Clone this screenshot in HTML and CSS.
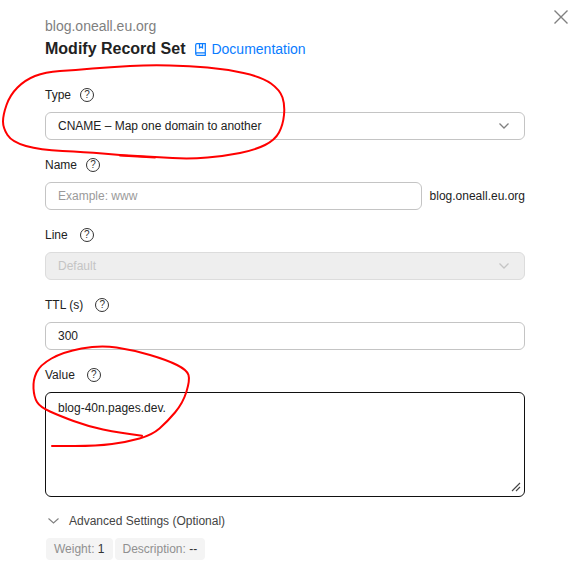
FILE: index.html
```html
<!DOCTYPE html>
<html lang="en">
<head>
<meta charset="utf-8">
<title>Modify Record Set</title>
<link rel="stylesheet" href="styles.css">
</head>
<body>
<main class="dialog">
  <button class="close" aria-label="Close">
    <svg width="16" height="16" viewBox="0 0 16 16"><path d="M1.5 1.5L14.5 14.5M14.5 1.5L1.5 14.5" fill="none" stroke="#808080" stroke-width="1.4"/></svg>
  </button>
  <header class="head">
    <div class="domain">blog.oneall.eu.org</div>
    <div class="title-row">
      <h1 class="title">Modify Record Set</h1>
      <a class="doc" href="#">
        <svg width="11" height="13" viewBox="0 0 11 13"><path d="M2 .7H10.3V12.3H2A1.4 1.4 0 0 1 .7 11V2A1.4 1.4 0 0 1 2 .7ZM.7 11A1.4 1.4 0 0 1 2 9.8H10.3M4.5 .7V5L6 4L7.5 5V.7" fill="none" stroke="#0a7cff" stroke-width="1.2"/></svg>
        Documentation
      </a>
    </div>
  </header>
  <form class="form">
    <div class="field">
      <div class="label"><span>Type</span><i class="help gap-type">?</i></div>
      <div class="control select"><span>CNAME – Map one domain to another</span>
        <svg class="chev" width="10" height="6" viewBox="0 0 10 6"><path d="M.5 .5L5 5L9.500 .5" fill="none" stroke="#808080" stroke-width="1.3"/></svg>
      </div>
    </div>
    <div class="field">
      <div class="label"><span>Name</span><i class="help gap-name">?</i></div>
      <div class="name-row">
        <div class="control name-input placeholder">Example: www</div>
        <span class="suffix">blog.oneall.eu.org</span>
      </div>
    </div>
    <div class="field">
      <div class="label"><span>Line</span><i class="help gap-line">?</i></div>
      <div class="control select disabled"><span>Default</span>
        <svg class="chev" width="10" height="6" viewBox="0 0 10 6"><path d="M.5 .5L5 5L9.500 .5" fill="none" stroke="#c4c4c4" stroke-width="1.3"/></svg>
      </div>
    </div>
    <div class="field">
      <div class="label"><span>TTL (s)</span><i class="help gap-ttl">?</i></div>
      <div class="control">300</div>
    </div>
    <div class="field">
      <div class="label"><span>Value</span><i class="help gap-value">?</i></div>
      <div class="control textarea">blog-40n.pages.dev.
        <svg class="grip" width="10" height="10" viewBox="0 0 10 10"><path d="M1 9L9 1M5 9L9 5" fill="none" stroke="#444" stroke-width="1.1"/></svg>
      </div>
    </div>
  </form>
  <section class="advanced">
    <div class="adv-head">
      <svg width="11" height="6" viewBox="0 0 11 6"><path d="M.5 .5L5.500 5L10.500 .5" fill="none" stroke="#808080" stroke-width="1.1"/></svg>
      <span>Advanced Settings (Optional)</span>
    </div>
    <div class="tags">
      <span class="tag">Weight: <b>1</b></span>
      <span class="tag">Description: <b>--</b></span>
    </div>
  </section>
  <svg class="ink" width="587" height="586" viewBox="0 0 587 586" aria-hidden="true">
    <path d="M92.5 68.5Q110 67 130 66Q150 65 170 65.5Q190 66 207.5 67.5Q225 69 243.5 73Q262 77 271 83.5Q280 90 282.5 97.5Q285 105 284 115Q283 125 279 132.5Q275 140 265 145Q255 150 240 153Q225 156 207.5 157.5Q190 159 172.5 158Q155 157 137.5 156Q120 155 102.5 153.5Q85 152 62.5 151Q40 150 26 146Q12 142 7.5 135Q3 128 3 121.5Q3 115 6.5 105Q10 95 17.5 87.5Q25 80 35 76Q45 72 60 71Q75 70 92.5 68.5"/>
    <path d="M120 155.5L155 157.5"/>
    <path d="M142 435.700Q120 433 103 429.5Q87 426 73.5 421Q60 416 50 411.5Q40 407 37 402Q34 397 33.5 388.5Q33 380 36.5 372.5Q40 365 51.5 358.5Q63 352 81.5 348.5Q100 345 116.5 347.5Q133 350 150 355Q167 360 177 365Q187 370 188.5 375Q190 380 186.5 391.5Q183 403 175 412.5Q167 422 159.5 428.5Q152 435 139.5 438.5Q127 442 112 444Q97 446 74.5 446L52 446"/>
  </svg>
</main>
</body>
</html>
```
FILE: styles.css
```css
* { box-sizing: border-box; }
html, body { margin: 0; padding: 0; background: #fff; }
body { font-family: "Liberation Sans", Arial, sans-serif; font-size: 12px; color: #222; }
.dialog { position: relative; width: 587px; height: 586px; padding: 17px 62px 0 45px; overflow: hidden; }
.close { position: absolute; top: 9px; right: 18px; width: 16px; height: 16px; padding: 0; border: 0; background: none; }
.close svg { display: block; }
.domain { font-size: 14px; line-height: 18px; color: #808080; }
.title-row { display: flex; align-items: center; margin-top: 4px; height: 20px; }
.title { margin: 0; font-size: 16px; line-height: 20px; font-weight: 700; color: #222; }
.doc { display: flex; align-items: center; gap: 5px; margin-left: 10px; font-size: 14px; color: #0a7cff; text-decoration: none; }
.form { margin-top: 26px; display: flex; flex-direction: column; gap: 15px; }
.label { display: flex; align-items: center; height: 20px; margin-bottom: 7px; line-height: 20px; }
.help { display: flex; align-items: center; justify-content: center; width: 14px; height: 14px; border: 1px solid #333; border-radius: 50%; font-style: normal; font-size: 10px; line-height: 1; color: #333; }
.gap-type { margin-left: 9px; }
.gap-name { margin-left: 9px; }
.gap-line { margin-left: 12px; }
.gap-ttl { margin-left: 12px; }
.gap-value { margin-left: 12px; }
.control { position: relative; display: flex; align-items: center; height: 28px; padding: 0 12px; border: 1px solid #c4c4c4; border-radius: 6px; background: #fff; line-height: 18px; }
.select { justify-content: space-between; }
.chev { margin-right: 3px; }
.disabled { background: #eeeeee; border-color: #dcdcdc; color: #c4c4c4; }
.name-row { display: flex; align-items: center; gap: 8px; }
.name-input { width: 377px; }
.placeholder { color: #9a9a9a; }
.suffix { white-space: nowrap; }
.textarea { align-items: flex-start; height: 105px; padding-top: 6px; border-color: #111; }
.grip { position: absolute; right: 3px; bottom: 4px; }
.advanced { margin-top: 15px; }
.adv-head { display: flex; align-items: center; gap: 10px; height: 18px; padding-left: 3px; color: #444; }
.tags { display: flex; gap: 2px; margin-top: 8px; padding-left: 1px; }
.tag { height: 22px; line-height: 22px; padding: 0 8px; border-radius: 4px; background: #f4f4f4; color: #909090; }
.tag b { font-weight: 400; color: #333; }
.ink { position: absolute; top: 0; left: 0; pointer-events: none; }
.ink path { fill: none; stroke: #f00; stroke-width: 2; stroke-linecap: round; stroke-linejoin: round; }
```
